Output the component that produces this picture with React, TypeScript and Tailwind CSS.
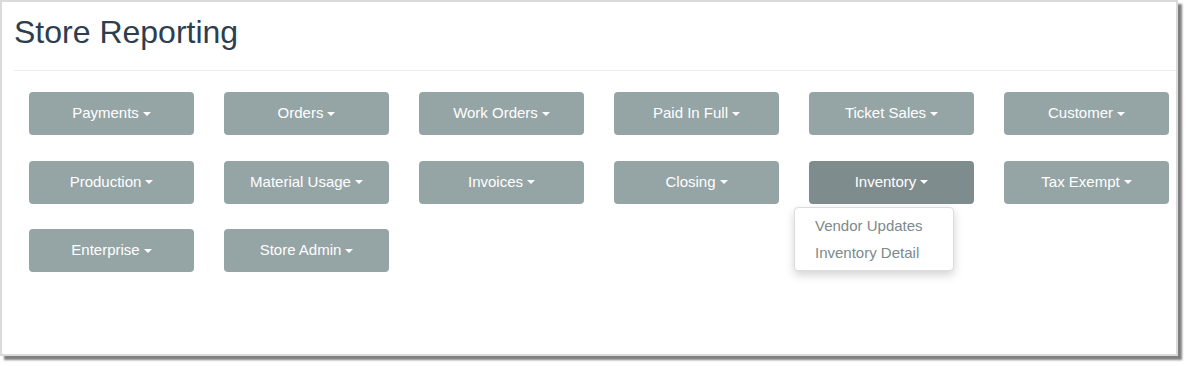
import React from 'react';

const rows: string[][] = [
  ['Payments', 'Orders', 'Work Orders', 'Paid In Full', 'Ticket Sales', 'Customer'],
  ['Production', 'Material Usage', 'Invoices', 'Closing', 'Inventory', 'Tax Exempt'],
  ['Enterprise', 'Store Admin'],
];

function Caret() {
  return (
    <span className="ml-[4px] inline-block h-0 w-0 border-x-[4px] border-t-[4px] border-x-transparent border-t-white align-middle" />
  );
}

function MenuButton({ label, open }: { label: string; open?: boolean }) {
  return (
    <div className="relative">
      <button
        type="button"
        className={`flex h-[43px] w-full items-center justify-center rounded-[4px] text-[15px] text-white ${
          open ? 'bg-[#7f8c8d]' : 'bg-[#95a5a6]'
        }`}
      >
        {label}
        <Caret />
      </button>
      {open && (
        <ul className="absolute left-[-15px] top-[46px] z-10 w-[160px] rounded-[4px] border border-[#dcdcdc] bg-white py-[4px] text-[15px] text-[#7b8a8b] shadow-[0_4px_10px_rgba(0,0,0,0.18)]">
          <li className="px-[20px] leading-[27px]">Vendor Updates</li>
          <li className="px-[20px] leading-[27px]">Inventory Detail</li>
        </ul>
      )}
    </div>
  );
}

export default function App() {
  return (
    <div className="h-[366px] w-[1188px] bg-white font-['Liberation_Sans',Arial,sans-serif]">
      <div className="h-[356px] w-[1178px] border-2 border-[#dadada] bg-white shadow-[4px_4px_2px_rgba(0,0,0,0.5)]">
        <div className="pl-[12px]">
          <h1 className="pt-[10px] text-[32px] leading-[40px] text-[#2c3e50]">Store Reporting</h1>
          <hr className="mt-[18px] border-t border-[#eeeeee]" />
        </div>
        <div className="grid grid-cols-[repeat(6,165px)] gap-x-[30px] gap-y-[25.5px] pl-[27px] pt-[21px]">
          {rows.flat().map((label) => (
            <MenuButton key={label} label={label} open={label === 'Inventory'} />
          ))}
        </div>
      </div>
    </div>
  );
}
